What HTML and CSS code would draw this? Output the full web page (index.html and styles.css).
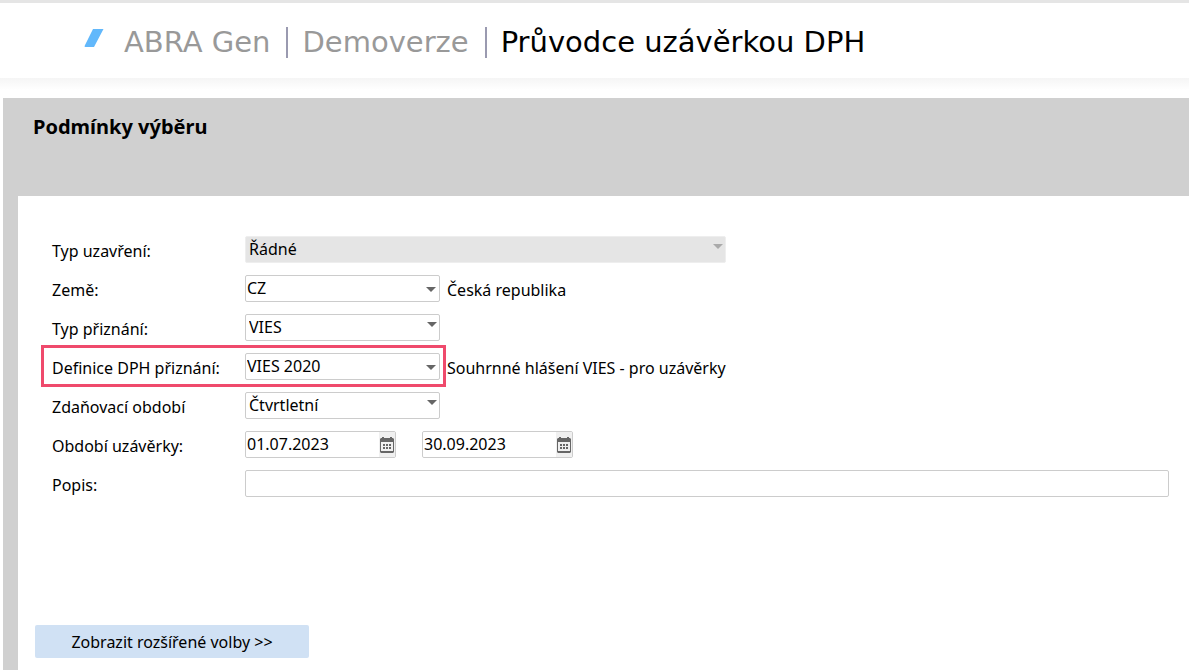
FILE: index.html
```html
<!DOCTYPE html>
<html lang="cs">
<head>
    <meta charset="UTF-8">
    <meta name="viewport" content="width=device-width, initial-scale=1.0">
    <title>Průvodce uzávěrkou DPH</title>
    <link rel="stylesheet" href="styles.css">
</head>
<body>
    <header class="header">
        <svg class="logo" viewBox="0 0 20 18" aria-hidden="true">
            <path d="M9 0h10.500L10 18H1.500Q0 18 .8 16.500z" fill="#62b8fb"/>
        </svg>
        <span class="crumb">ABRA Gen</span>
        <span class="crumb">Demoverze</span>
        <h1 class="crumb current">Průvodce uzávěrkou DPH</h1>
    </header>

    <main class="panel">
        <h2>Podmínky výběru</h2>

        <form class="form">
            <div class="rows">
                <div class="row">
                    <label for="closeType">Typ uzavření:</label>
                    <div class="select list wide disabled">
                        <select id="closeType" disabled><option>Řádné</option></select>
                    </div>
                </div>
                <div class="row">
                    <label for="country">Země:</label>
                    <div class="select">
                        <select id="country"><option>CZ</option></select>
                    </div>
                    <span class="note">Česká republika</span>
                </div>
                <div class="row">
                    <label for="returnType">Typ přiznání:</label>
                    <div class="select list">
                        <select id="returnType"><option>VIES</option></select>
                    </div>
                </div>
                <div class="row">
                    <div class="row highlight">
                        <label for="definition">Definice DPH přiznání:</label>
                        <div class="select">
                            <select id="definition"><option>VIES 2020</option></select>
                        </div>
                    </div>
                    <span class="note">Souhrnné hlášení VIES - pro uzávěrky</span>
                </div>
                <div class="row">
                    <label for="taxPeriod">Zdaňovací období</label>
                    <div class="select list">
                        <select id="taxPeriod"><option>Čtvrtletní</option></select>
                    </div>
                </div>
                <div class="row">
                    <label for="dateFrom">Období uzávěrky:</label>
                    <div class="dates">
                        <div class="date">
                            <input type="text" id="dateFrom" value="01.07.2023">
                            <button type="button" aria-label="Vybrat datum od">
                                <svg viewBox="0 0 14 16" aria-hidden="true">
                                    <path fill="#666" fill-rule="evenodd" d="M2 0h2v1h6V0h2v1h1l1 1v13l-1 1H1l-1-1V2l1-1h1zM1 5v9h12V5z"/>
                                    <path fill="#666" d="M3 7h2v2H3zM6 7h2v2H6zM9 7h2v2H9zM3 10h2v2H3zM6 10h2v2H6zM9 10h2v2H9z"/>
                                </svg>
                            </button>
                        </div>
                        <div class="date">
                            <input type="text" id="dateTo" value="30.09.2023" aria-label="Období uzávěrky do">
                            <button type="button" aria-label="Vybrat datum do">
                                <svg viewBox="0 0 14 16" aria-hidden="true">
                                    <path fill="#666" fill-rule="evenodd" d="M2 0h2v1h6V0h2v1h1l1 1v13l-1 1H1l-1-1V2l1-1h1zM1 5v9h12V5z"/>
                                    <path fill="#666" d="M3 7h2v2H3zM6 7h2v2H6zM9 7h2v2H9zM3 10h2v2H3zM6 10h2v2H6zM9 10h2v2H9z"/>
                                </svg>
                            </button>
                        </div>
                    </div>
                </div>
                <div class="row">
                    <label for="description">Popis:</label>
                    <input class="text" type="text" id="description">
                </div>
            </div>

            <button type="button" class="more-btn">Zobrazit rozšířené volby &gt;&gt;</button>
        </form>
    </main>
</body>
</html>
```

FILE: styles.css
```css
* {
    margin: 0;
    padding: 0;
    box-sizing: border-box;
}

body {
    min-height: 100vh;
    display: flex;
    flex-direction: column;
    background: #fff;
    color: #000;
    font: 16px/24px Tahoma, "Noto Sans", sans-serif;
}

/* Header */
.header {
    display: flex;
    align-items: center;
    height: 98px;
    padding: 4px 0 20px 84px;
    border-top: 3px solid #e5e5e5;
    background: linear-gradient(#f5f5f5, #fff) 0 75px / 100% 12px no-repeat;
}

.logo {
    width: 20px;
    height: 18px;
    margin: 0 20px 10px 0;
}

.crumb {
    color: #999;
    font: 29px/31px Verdana, "DejaVu Sans", sans-serif;
    white-space: nowrap;
}

.crumb + .crumb {
    margin-left: 16px;
    padding-left: 14px;
    border-left: 2px solid #9a9ab0;
}

.crumb.current {
    color: #000;
}

/* Panel */
.panel {
    flex: 1;
    display: flex;
    flex-direction: column;
    margin-left: 3px;
    padding-left: 15px;
    background: #d0d0d0;
}

h2 {
    height: 98px;
    padding: 16px 15px;
    font-size: 20px;
    line-height: 26px;
}

.form {
    flex: 1;
    display: flex;
    flex-direction: column;
    align-items: flex-start;
    justify-content: space-between;
    padding: 40px 20px 12px 17px;
    background: #fff;
}

.rows {
    display: flex;
    flex-direction: column;
    gap: 12px;
    width: 100%;
    padding-left: 17px;
}

.row {
    display: flex;
    align-items: center;
    height: 27px;
}

.row label {
    flex: none;
    width: 193px;
    padding-top: 2px;
}

.note {
    padding: 2px 0 0 7px;
    white-space: nowrap;
}

/* Fields */
select,
input {
    width: 100%;
    height: 27px;
    padding: 0 1px 2px;
    border: 1px solid #ccc;
    border-radius: 2px;
    background: #fff;
    color: #000;
    font: inherit;
    appearance: none;
    outline: none;
}

.select {
    position: relative;
    width: 195px;
}

.select::after {
    content: "";
    position: absolute;
    top: 12px;
    right: 4px;
    border: 5px solid transparent;
    border-top-color: #666;
    border-bottom: 0;
    pointer-events: none;
}

.select.list::after {
    top: 8px;
    right: 3px;
}

.list select {
    padding-left: 3px;
}

.select.wide {
    width: 481px;
}

.disabled select {
    background: #e5e5e5;
    border-color: #eee;
    opacity: 1;
}

.select.disabled::after {
    border-top-color: #aaa;
}

.highlight {
    position: relative;
}

.highlight::before {
    content: "";
    position: absolute;
    inset: -8px -6px -7px -11px;
    border: 3px solid #ef4a6c;
    pointer-events: none;
}

.dates {
    display: flex;
    gap: 26px;
}

.date {
    display: flex;
    width: 151px;
    height: 27px;
    border: 1px solid #ccc;
    border-radius: 2px;
}

.date input {
    flex: 1;
    min-width: 0;
    height: 25px;
    border: 0;
}

.date button {
    display: flex;
    align-items: center;
    justify-content: center;
    width: 16px;
    border: 0;
    background: #f0f0f0;
}

.date svg {
    width: 14px;
    height: 16px;
}

.row .text {
    flex: 1;
}

.more-btn {
    width: 274px;
    height: 33px;
    border: 0;
    border-radius: 2px;
    background: #d0e1f4;
    color: #000;
    font: inherit;
}
```
